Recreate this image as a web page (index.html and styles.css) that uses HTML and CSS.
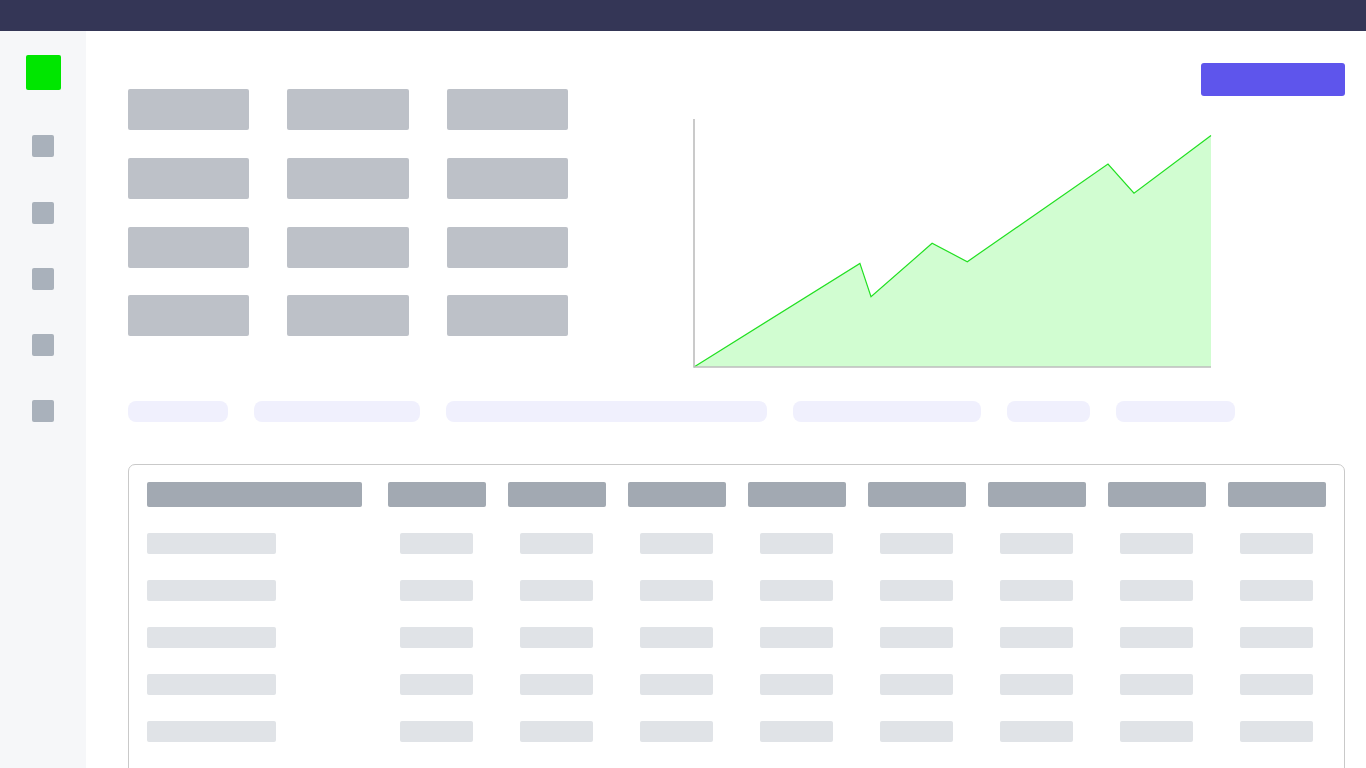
FILE: index.html
```html
<!DOCTYPE html>
<html lang="en">
  <head>
    <title>Dashboard</title>
    <link rel="stylesheet" href="styles.css">
  </head>
  <body>
    <header class="topbar"></header>
    <div class="layout">
      <nav class="sidebar">
        <div class="logo"></div>
        <div class="navItem"></div>
        <div class="navItem"></div>
        <div class="navItem"></div>
        <div class="navItem"></div>
        <div class="navItem"></div>
      </nav>
      <main class="content">
        <div class="toolbar">
          <button class="primaryButton" type="button"></button>
        </div>
        <section class="overview">
          <div class="statGrid">
            <div class="stat"></div>
            <div class="stat"></div>
            <div class="stat"></div>
            <div class="stat"></div>
            <div class="stat"></div>
            <div class="stat"></div>
            <div class="stat"></div>
            <div class="stat"></div>
            <div class="stat"></div>
            <div class="stat"></div>
            <div class="stat"></div>
            <div class="stat"></div>
          </div>
          <svg class="chart" viewBox="0 0 520 250" width="520" height="250">
            <polygon class="chartArea" points="2,249 167.9,145.4 179,178.8 240.1,125.3 275.3,143.7 416,46.1 442,75.2 519,17.4 519,249" />
            <polyline class="chartLine" points="2,249 167.9,145.4 179,178.8 240.1,125.3 275.3,143.7 416,46.1 442,75.2 519,17.4" />
            <path class="chartAxis" d="M2 1V249H519" />
          </svg>
        </section>
        <div class="filters">
          <span class="pill" style="width: 100px"></span>
          <span class="pill" style="width: 166px"></span>
          <span class="pill" style="width: 321px"></span>
          <span class="pill" style="width: 188px"></span>
          <span class="pill" style="width: 83px"></span>
          <span class="pill" style="width: 119px"></span>
        </div>
        <div class="tableCard">
          <div class="tableGrid" id="tableGrid">
            <div class="headCell wide"></div>
            <div class="headCell"></div>
            <div class="headCell"></div>
            <div class="headCell"></div>
            <div class="headCell"></div>
            <div class="headCell"></div>
            <div class="headCell"></div>
            <div class="headCell"></div>
            <div class="headCell"></div>
          </div>
        </div>
      </main>
    </div>
    <script>
      // fill the table body with placeholder rows
      const grid = document.getElementById('tableGrid');
      const rowCount = 5;
      const columnCount = 9;

      for (let r = 0; r < rowCount; r++) {
        for (let c = 0; c < columnCount; c++) {
          const cell = document.createElement('div');
          cell.className = c === 0 ? 'cell wide' : 'cell';
          grid.appendChild(cell);
        }
      }
    </script>
  </body>
</html>
```

FILE: styles.css
```css
html,
body {
  margin: 0;
  height: 100%;
}
body {
  display: flex;
  flex-direction: column;
  overflow: hidden;
  background-color: white;
  font-family: 'Liberation Sans', Arial, sans-serif;
}
.topbar {
  flex: none;
  height: 31px;
  background-color: #343656;
}
.layout {
  flex: 1;
  display: flex;
  min-height: 0;
}
.sidebar {
  flex: none;
  width: 86px;
  display: flex;
  flex-direction: column;
  align-items: center;
  gap: 44.25px;
  padding-top: 24px;
  background-color: #f6f7f9;
}
.logo {
  width: 35px;
  height: 35px;
  margin-bottom: 1px;
  border-radius: 2px;
  background-color: #00e600;
}
.navItem {
  width: 22px;
  height: 22px;
  border-radius: 2px;
  background-color: #a9b1bb;
}
.content {
  flex: 1;
  min-width: 0;
  padding: 32px 21px 0 42px;
}
.toolbar {
  display: flex;
  justify-content: flex-end;
  margin-bottom: -7px;
}
.primaryButton {
  width: 144px;
  height: 33px;
  border: none;
  border-radius: 3px;
  background-color: #5e55ec;
}
.overview {
  display: flex;
  align-items: flex-start;
}
.statGrid {
  display: grid;
  grid-template-columns: 121px 122px 121px;
  grid-template-rows: 41px 41px 41px 41px;
  gap: 27.8px 38px;
}
.stat {
  border-radius: 2px;
  background-color: #bdc1c8;
}
.chart {
  display: block;
  margin: 29px 0 0 124px;
}
.chartArea {
  fill: #d1fdd1;
}
.chartLine {
  fill: none;
  stroke: #22e022;
  stroke-width: 1.2;
}
.chartAxis {
  fill: none;
  stroke: #bdbdbd;
  stroke-width: 1.6;
}
.filters {
  display: flex;
  gap: 26px;
  margin-top: 33px;
}
.pill {
  height: 21px;
  border-radius: 8px;
  background-color: #f0f0fd;
}
.tableCard {
  margin-top: 42px;
  padding: 17px 18px 40px 18px;
  border: 1px solid #c9c9c9;
  border-radius: 7px;
}
.tableGrid {
  display: grid;
  grid-template-columns: 1fr repeat(8, 98px);
  column-gap: 22px;
  row-gap: 26px;
}
.headCell {
  height: 25px;
  border-radius: 2px;
  background-color: #a2a9b2;
}
.headCell.wide {
  width: 215px;
}
.cell {
  justify-self: start;
  width: 73px;
  height: 21px;
  margin-left: 12px;
  border-radius: 2px;
  background-color: #e0e3e7;
}
.cell.wide {
  width: 129px;
  margin-left: 0;
}
```
